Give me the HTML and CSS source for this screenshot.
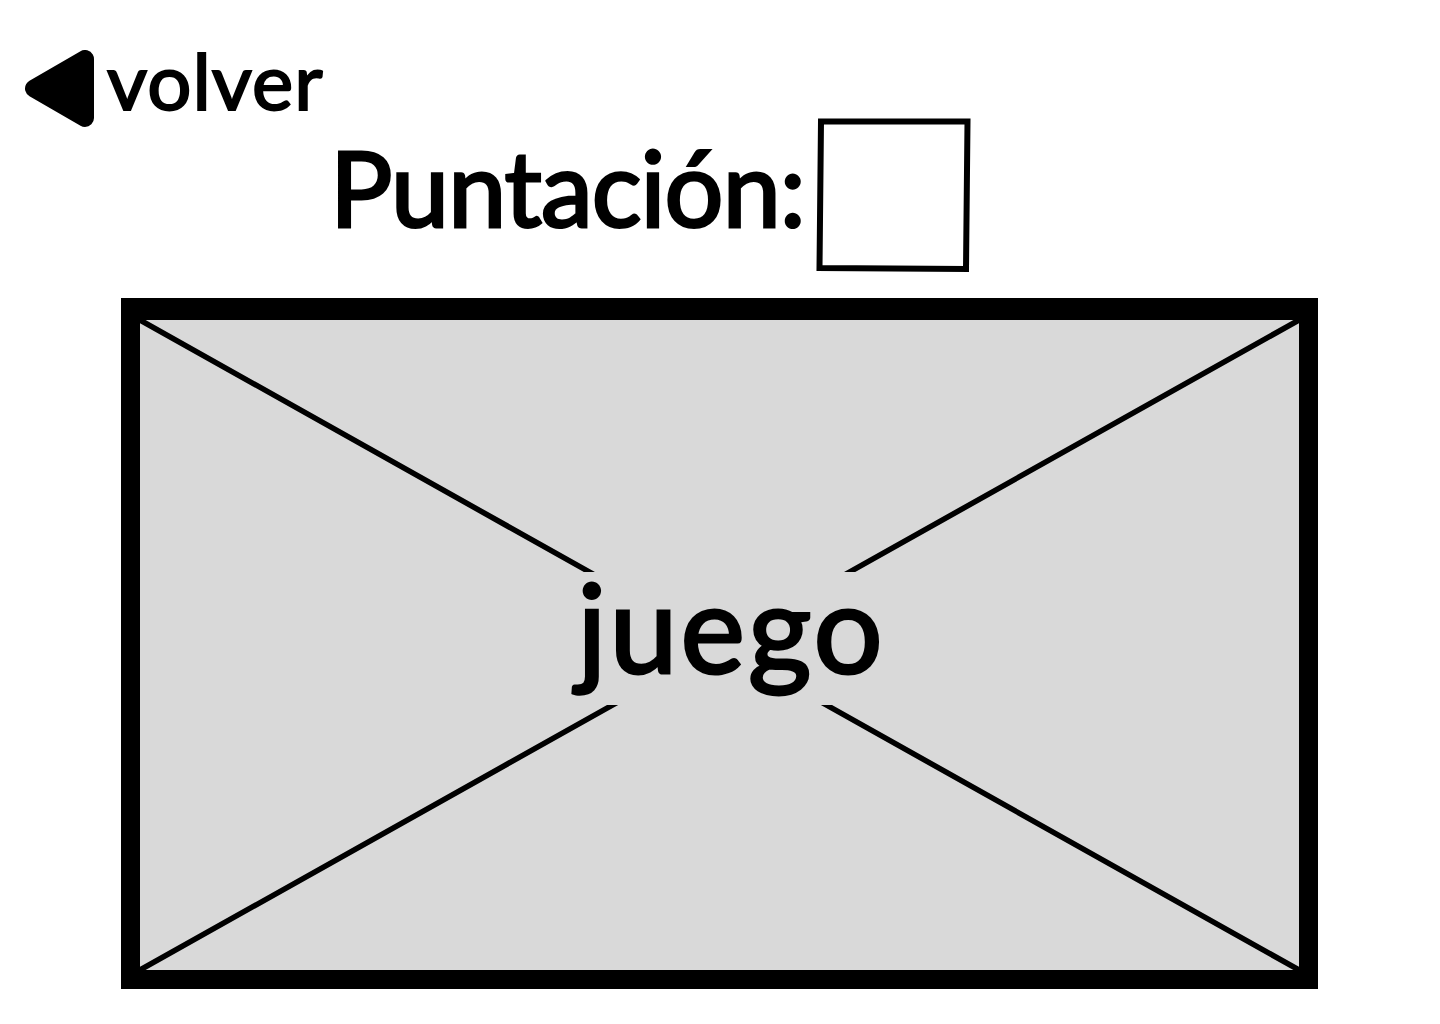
FILE: index.html
```html
<!DOCTYPE html>
<html lang="es">
<head>
<meta charset="utf-8">
<title>Juego</title>
<link rel="stylesheet" href="styles.css">
</head>
<body>
<main class="page">
  <a class="back" href="#">
    <svg class="back-icon" width="72" height="78" viewBox="0 0 72 78"><path class="back-arrow" d="M10 38.500 L61 9 V68 Z"/></svg>
    <span class="back-label">volver</span>
  </a>
  <div class="score">
    <span class="score-label">Puntación:</span>
    <svg class="score-box" width="156" height="155" viewBox="0 0 156 155"><path class="score-outline" d="M5 3.500 H151.500 L150 151 L3.500 150 Z"/></svg>
  </div>
  <section class="game">
    <svg class="game-cross" viewBox="0 0 1159 650" preserveAspectRatio="none"><path class="game-lines" d="M0 0 L1159 650 M1159 0 L0 650"/></svg>
    <span class="game-label">juego</span>
  </section>
</main>
</body>
</html>
```
FILE: styles.css
```css
html, body { margin: 0; background: #fff; }
.page {
  display: flex;
  flex-direction: column;
  height: 1024px;
  padding-top: 50px;
  box-sizing: border-box;
  font-family: Lato, "Open Sans", sans-serif;
  color: #000;
}
.back {
  display: flex;
  align-items: flex-start;
  gap: 11px;
  height: 68px;
  padding-left: 24px;
  color: inherit;
  text-decoration: none;
}
.back-arrow { fill: #000; stroke: #000; stroke-width: 18; stroke-linejoin: round; }
.back-label {
  font-size: 78px;
  line-height: 60px;
  letter-spacing: 1px;
  font-weight: 400;
  -webkit-text-stroke: 2px #000;
}
.score {
  display: flex;
  align-items: flex-start;
  gap: 11px;
  height: 155px;
  padding-left: 330px;
}
.score-label {
  font-size: 104px;
  line-height: 137px;
  letter-spacing: -0.9px;
  font-weight: 400;
  -webkit-text-stroke: 3px #000;
  white-space: nowrap;
}
.score-outline { fill: #fff; stroke: #000; stroke-width: 6; }
.game {
  position: relative;
  display: flex;
  align-items: center;
  justify-content: center;
  box-sizing: border-box;
  width: 1197px;
  height: 691px;
  margin: 25px 0 0 121px;
  border: 19px solid #000;
  border-top-width: 22px;
  background: #d9d9d9;
}
.game-cross {
  position: absolute;
  inset: 0;
  width: 100%;
  height: 100%;
}
.game-lines { fill: none; stroke: #000; stroke-width: 5.5; }
.game-label {
  position: relative;
  display: block;
  padding: 0 20px;
  height: 133px;
  margin: -14px 0 0 24px;
  background: #d9d9d9;
  font-size: 122px;
  line-height: 108px;
  letter-spacing: 3px;
  -webkit-text-stroke: 3px #000;
}
```
